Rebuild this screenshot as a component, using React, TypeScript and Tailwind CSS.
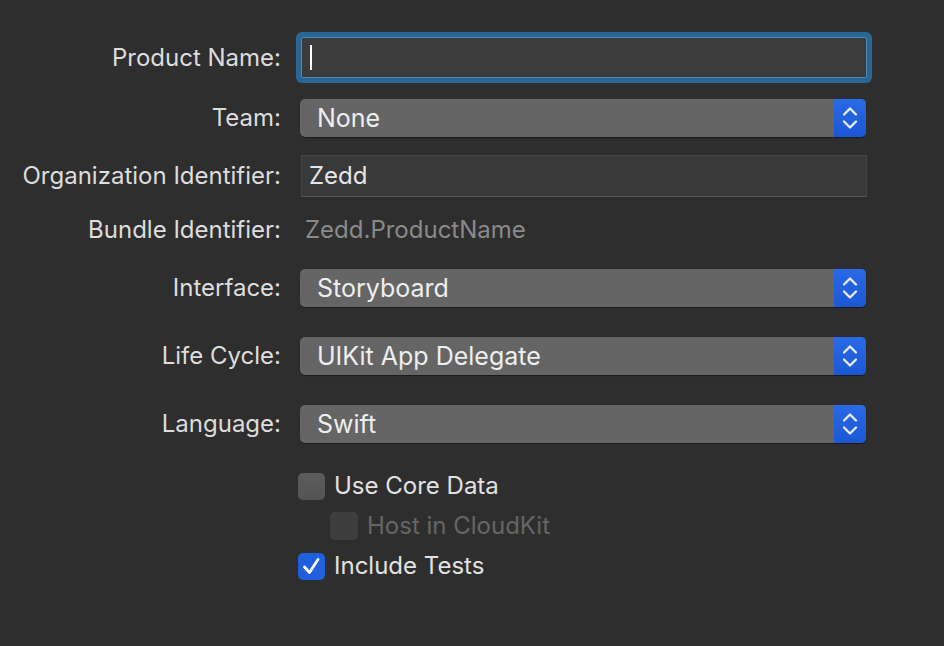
const font = { fontFamily: 'Inter, "Liberation Sans", sans-serif' };

const Chevrons = () => (
  <svg width="16" height="26" viewBox="0 0 16 26" fill="none">
    <path d="M2 9.5 L8 3.5 L14 9.5" stroke="#e8eefc" strokeWidth="2.3" strokeLinecap="round" strokeLinejoin="round" />
    <path d="M2 16.5 L8 22.5 L14 16.5" stroke="#e8eefc" strokeWidth="2.3" strokeLinecap="round" strokeLinejoin="round" />
  </svg>
);

const Label = ({ children }: { children: React.ReactNode }) => (
  <div className="w-[281px] shrink-0 text-right text-[24px] leading-none text-[#dddddd]">{children}</div>
);

const Popup = ({ value }: { value: string }) => (
  <div className="ml-[19px] flex h-[38px] w-[566px] overflow-hidden rounded-[5px] bg-[#656565] shadow-[0_1px_1px_rgba(0,0,0,0.45)]">
    <div className="flex flex-1 items-center pl-[17px] text-[25px] leading-none text-[#eeeeee]">{value}</div>
    <div className="flex w-[32px] items-center justify-center bg-gradient-to-b from-[#2a6ae6] to-[#1b57d4]">
      <Chevrons />
    </div>
  </div>
);

const Checkbox = ({ checked, disabled, label }: { checked?: boolean; disabled?: boolean; label: string }) => (
  <div className="flex h-[28px] items-center gap-[9px]">
    <div
      className={
        checked
          ? 'flex h-[27px] w-[27px] items-center justify-center rounded-[5px] bg-[#1f60dd]'
          : disabled
            ? 'h-[28px] w-[28px] rounded-[5px] bg-[#3e3e3e]'
            : 'h-[27px] w-[27px] rounded-[5px] bg-gradient-to-b from-[#5c5c5c] to-[#545454]'
      }
    >
      {checked && (
        <svg width="21" height="21" viewBox="0 0 21 21" fill="none">
          <path d="M3.5 11 L8.5 16.5 L17 3.5" stroke="white" strokeWidth="2.8" strokeLinecap="round" strokeLinejoin="round" />
        </svg>
      )}
    </div>
    <span className={disabled ? 'text-[24px] leading-none text-[#666666]' : 'text-[24px] leading-none text-[#e2e2e2]'}>
      {label}
    </span>
  </div>
);

export default function App() {
  return (
    <div className="h-[646px] w-[944px] bg-[#2e2e2e] pt-[37px]" style={font}>
      <div className="flex flex-col">
        {/* Product Name */}
        <div className="flex h-[41px] items-center">
          <Label>Product Name:</Label>
          <div className="ml-[20px] flex h-[41px] w-[566px] items-center rounded-[2px] border border-[#4b88b8] bg-[#3b3b3b] pl-[8px] shadow-[0_0_0_5px_#2b6794]">
            <div className="h-[25px] w-[2px] bg-white" />
          </div>
        </div>

        {/* Team */}
        <div className="mt-[21px] flex h-[38px] items-center">
          <Label>Team:</Label>
          <Popup value="None" />
        </div>

        {/* Organization Identifier */}
        <div className="mt-[18px] flex h-[42px] items-center">
          <Label>Organization Identifier:</Label>
          <div className="ml-[20px] flex h-[42px] w-[566px] items-center border border-[#444444] border-b-[#555555] bg-[#393939] pl-[7px] text-[24px] leading-none text-[#e6e6e6]">
            Zedd
          </div>
        </div>

        {/* Bundle Identifier */}
        <div className="mt-[13px] flex h-[40px] items-center">
          <Label>Bundle Identifier:</Label>
          <div className="ml-[24px] text-[24px] leading-none text-[#8a8a8a]">Zedd.ProductName</div>
        </div>

        {/* Interface */}
        <div className="mt-[19px] flex h-[38px] items-center">
          <Label>Interface:</Label>
          <Popup value="Storyboard" />
        </div>

        {/* Life Cycle */}
        <div className="mt-[30px] flex h-[38px] items-center">
          <Label>Life Cycle:</Label>
          <Popup value="UIKit App Delegate" />
        </div>

        {/* Language */}
        <div className="mt-[30px] flex h-[38px] items-center">
          <Label>Language:</Label>
          <Popup value="Swift" />
        </div>

        {/* Options */}
        <div className="mt-[29px] flex flex-col pl-[298px]">
          <Checkbox label="Use Core Data" />
          <div className="mt-[12px] pl-[32px]">
            <Checkbox label="Host in CloudKit" disabled />
          </div>
          <div className="mt-[12px]">
            <Checkbox label="Include Tests" checked />
          </div>
        </div>
      </div>
    </div>
  );
}
